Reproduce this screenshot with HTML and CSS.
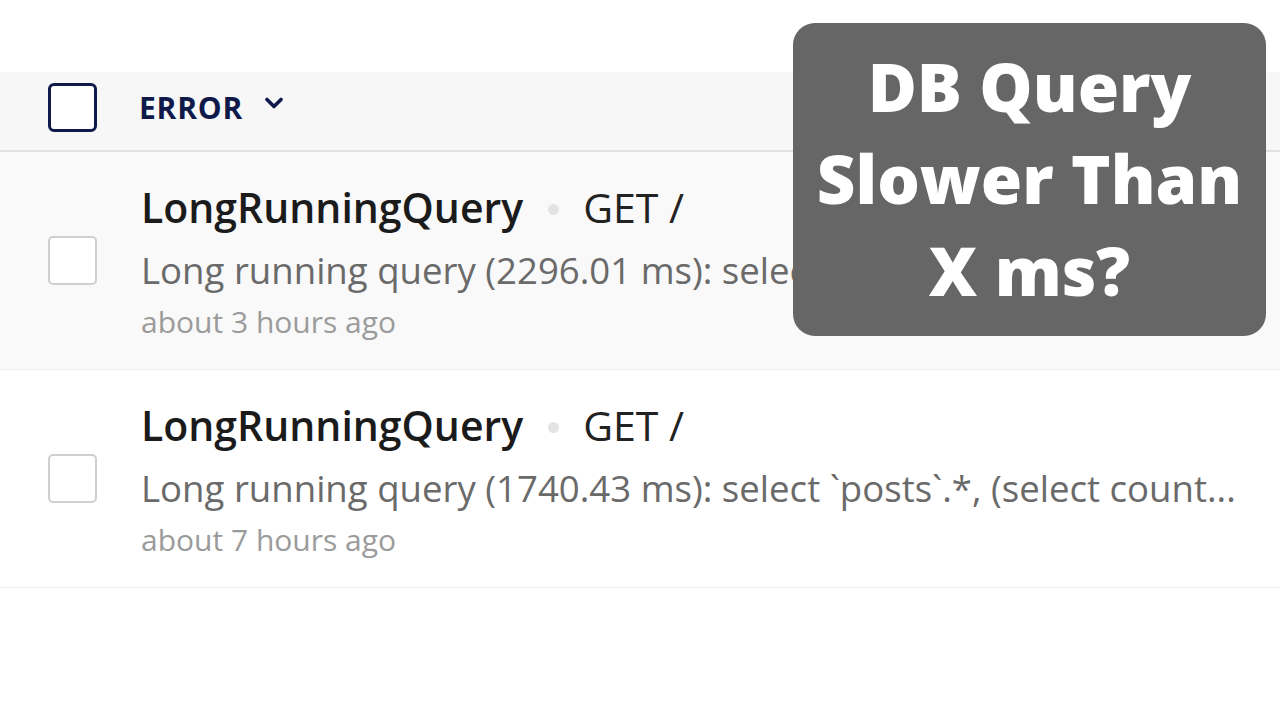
FILE: index.html
```html
<!DOCTYPE html>
<html>
<head>
<meta charset="utf-8">
<link rel="stylesheet" href="styles.css">
</head>
<body>
<div class="page">
  <div class="spacer"></div>
  <div class="header">
    <span class="cb cb-head"></span>
    <span class="level">ERROR</span>
    <svg class="chev" width="20" height="12" viewBox="0 0 20 12"><path d="M3 2.5 L10 9.5 L17 2.5" fill="none" stroke="#101a4a" stroke-width="3.6" stroke-linecap="round" stroke-linejoin="round"/></svg>
  </div>
  <div class="row row-alt">
    <span class="cb"></span>
    <div class="info">
      <div class="title"><span class="name">LongRunningQuery</span><span class="dot"></span><span class="route">GET /</span></div>
      <div class="desc desc-clip">Long running query (2296.01 ms): select `posts`.*, (select count...</div>
      <div class="time">about 3 hours ago</div>
    </div>
  </div>
  <div class="row">
    <span class="cb"></span>
    <div class="info">
      <div class="title"><span class="name">LongRunningQuery</span><span class="dot"></span><span class="route">GET /</span></div>
      <div class="desc">Long running query (1740.43 ms): select `posts`.*, (select count...</div>
      <div class="time">about 7 hours ago</div>
    </div>
  </div>
  <div class="overlay">DB Query<br>Slower Than<br>X ms?</div>
</div>
</body>
</html>
```
FILE: styles.css
```css
html, body {
  margin: 0;
  padding: 0;
  background: #ffffff;
}
.page {
  position: relative;
  width: 1280px;
  height: 720px;
  overflow: hidden;
  font-family: "Open Sans", "Noto Sans", sans-serif;
}
.spacer {
  height: 72px;
}
.header {
  height: 80px;
  box-sizing: border-box;
  padding-bottom: 8px;
  background: #f7f7f8;
  border-bottom: 2px solid #e1e1e3;
  display: flex;
  align-items: center;
  padding-left: 48px;
}
.cb {
  flex: none;
  width: 49px;
  height: 49px;
  box-sizing: border-box;
  border: 2px solid #cfcfcf;
  border-radius: 5px;
  background: #fff;
}
.cb-head {
  border: 3px solid #101a4a;
  border-radius: 6px;
}
.level {
  margin-left: 42px;
  font-size: 30px;
  font-weight: 700;
  letter-spacing: 0.8px;
  color: #101a4a;
}
.chev {
  margin-left: 21px;
  margin-top: -8px;
}
.row {
  height: 218px;
  display: flex;
  align-items: center;
  padding-left: 48px;
  border-bottom: 1px solid #efefef;
  box-sizing: border-box;
}
.row-alt {
  background: #f9f9f9;
}
.info {
  margin-left: 44px;
  padding-bottom: 5px;
  white-space: nowrap;
}
.title {
  display: flex;
  align-items: center;
  font-size: 41px;
  line-height: 50px;
  color: #1b1b1b;
}
.name {
  font-weight: 600;
}
.dot {
  width: 11px;
  height: 11px;
  border-radius: 50%;
  background: #e3e3e3;
  margin: 6px 24px 0 25px;
}
.route {
  font-weight: 400;
  color: #222;
}
.desc {
  font-size: 36.6px;
  line-height: 76px;
  color: #6a6a6a;
}
.desc-clip {
  width: 652px;
  overflow: hidden;
}
.time {
  font-size: 30px;
  line-height: 27px;
  color: #9b9b9b;
}
.overlay {
  position: absolute;
  left: 793px;
  top: 23px;
  width: 473px;
  height: 313px;
  box-sizing: border-box;
  padding-top: 17px;
  background: #666666;
  border-radius: 22px;
  color: #ffffff;
  font-weight: 800;
  font-size: 67px;
  line-height: 92px;
  text-align: center;
}
```
